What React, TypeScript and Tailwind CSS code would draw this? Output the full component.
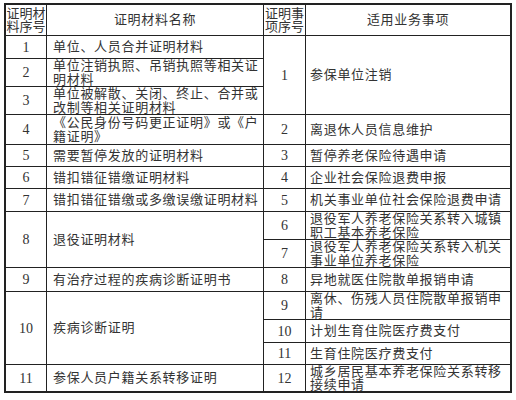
import React from "react";

type Cell = {
  text: string[];
  kind: "num" | "name" | "head" | "headNo";
  span?: string;
  col?: "l" | "r";
};

const font = "font-['Liberation_Serif','Noto_Sans_CJK_SC',serif]";

// rows listed in document order; spans let grid auto-placement fill the rest
const cells: Cell[] = [
  { text: ["证明材", "料序号"], kind: "headNo" },
  { text: ["证明材料名称"], kind: "head" },
  { text: ["证明事", "项序号"], kind: "headNo" },
  { text: ["适用业务事项"], kind: "head" },

  { text: ["1"], kind: "num" },
  { text: ["单位、人员合并证明材料"], kind: "name", col: "l" },
  { text: ["1"], kind: "num", span: "row-span-3" },
  { text: ["参保单位注销"], kind: "name", col: "r", span: "row-span-3" },

  { text: ["2"], kind: "num" },
  { text: ["单位注销执照、吊销执照等相关证", "明材料"], kind: "name", col: "l" },

  { text: ["3"], kind: "num" },
  { text: ["单位被解散、关闭、终止、合并或", "改制等相关证明材料"], kind: "name", col: "l" },

  { text: ["4"], kind: "num" },
  { text: ["《公民身份号码更正证明》或《户", "籍证明》"], kind: "name", col: "l" },
  { text: ["2"], kind: "num" },
  { text: ["离退休人员信息维护"], kind: "name", col: "r" },

  { text: ["5"], kind: "num" },
  { text: ["需要暂停发放的证明材料"], kind: "name", col: "l" },
  { text: ["3"], kind: "num" },
  { text: ["暂停养老保险待遇申请"], kind: "name", col: "r" },

  { text: ["6"], kind: "num" },
  { text: ["错扣错征错缴证明材料"], kind: "name", col: "l" },
  { text: ["4"], kind: "num" },
  { text: ["企业社会保险退费申报"], kind: "name", col: "r" },

  { text: ["7"], kind: "num" },
  { text: ["错扣错征错缴或多缴误缴证明材料"], kind: "name", col: "l" },
  { text: ["5"], kind: "num" },
  { text: ["机关事业单位社会保险退费申请"], kind: "name", col: "r" },

  { text: ["8"], kind: "num", span: "row-span-2" },
  { text: ["退役证明材料"], kind: "name", col: "l", span: "row-span-2" },
  { text: ["6"], kind: "num" },
  { text: ["退役军人养老保险关系转入城镇", "职工基本养老保险"], kind: "name", col: "r" },
  { text: ["7"], kind: "num" },
  { text: ["退役军人养老保险关系转入机关", "事业单位养老保险"], kind: "name", col: "r" },

  { text: ["9"], kind: "num" },
  { text: ["有治疗过程的疾病诊断证明书"], kind: "name", col: "l" },
  { text: ["8"], kind: "num" },
  { text: ["异地就医住院散单报销申请"], kind: "name", col: "r" },

  { text: ["10"], kind: "num", span: "row-span-3" },
  { text: ["疾病诊断证明"], kind: "name", col: "l", span: "row-span-3" },
  { text: ["9"], kind: "num" },
  { text: ["离休、伤残人员住院散单报销申", "请"], kind: "name", col: "r" },
  { text: ["10"], kind: "num" },
  { text: ["计划生育住院医疗费支付"], kind: "name", col: "r" },
  { text: ["11"], kind: "num" },
  { text: ["生育住院医疗费支付"], kind: "name", col: "r" },

  { text: ["11"], kind: "num" },
  { text: ["参保人员户籍关系转移证明"], kind: "name", col: "l" },
  { text: ["12"], kind: "num" },
  { text: ["城乡居民基本养老保险关系转移", "接续申请"], kind: "name", col: "r" },
];

function TableCell({ cell }: { cell: Cell }) {
  if (cell.kind === "num") {
    return (
      <div className={`${cell.span ?? ""} bg-white flex items-center justify-center text-[14px] text-[#333]`}>
        {cell.text[0]}
      </div>
    );
  }
  if (cell.kind === "headNo") {
    return (
      <div className="bg-white flex flex-col items-center justify-center text-[13px] leading-[13.5px] text-[#333] whitespace-nowrap">
        {cell.text.map((t) => (
          <span key={t}>{t}</span>
        ))}
      </div>
    );
  }
  if (cell.kind === "head") {
    return (
      <div className="bg-white flex items-center justify-center text-[13px] tracking-[0.7px] text-[#333]">
        {cell.text[0]}
      </div>
    );
  }
  return (
    <div
      className={`${cell.span ?? ""} bg-white flex flex-col justify-center overflow-hidden whitespace-nowrap text-[13px] leading-[13.5px] tracking-[0.7px] text-[#333] ${
        cell.col === "l" ? "pl-[6px]" : "pl-[4px]"
      }`}
    >
      {cell.text.map((t) => (
        <span key={t}>{t}</span>
      ))}
    </div>
  );
}

export default function App() {
  return (
    <div className={`w-[516px] h-[400px] bg-white pt-[3px] pl-[4px] ${font}`}>
      <div className="grid w-fit grid-cols-[40px_216px_41px_204px] grid-rows-[30px_22px_27px_27px_29px_21px_21px_22px_27px_27px_23px_27px_22px_21px_26px] gap-px bg-[#222] border-2 border-[#222]">
        {cells.map((c, i) => (
          <TableCell key={i} cell={c} />
        ))}
      </div>
    </div>
  );
}
